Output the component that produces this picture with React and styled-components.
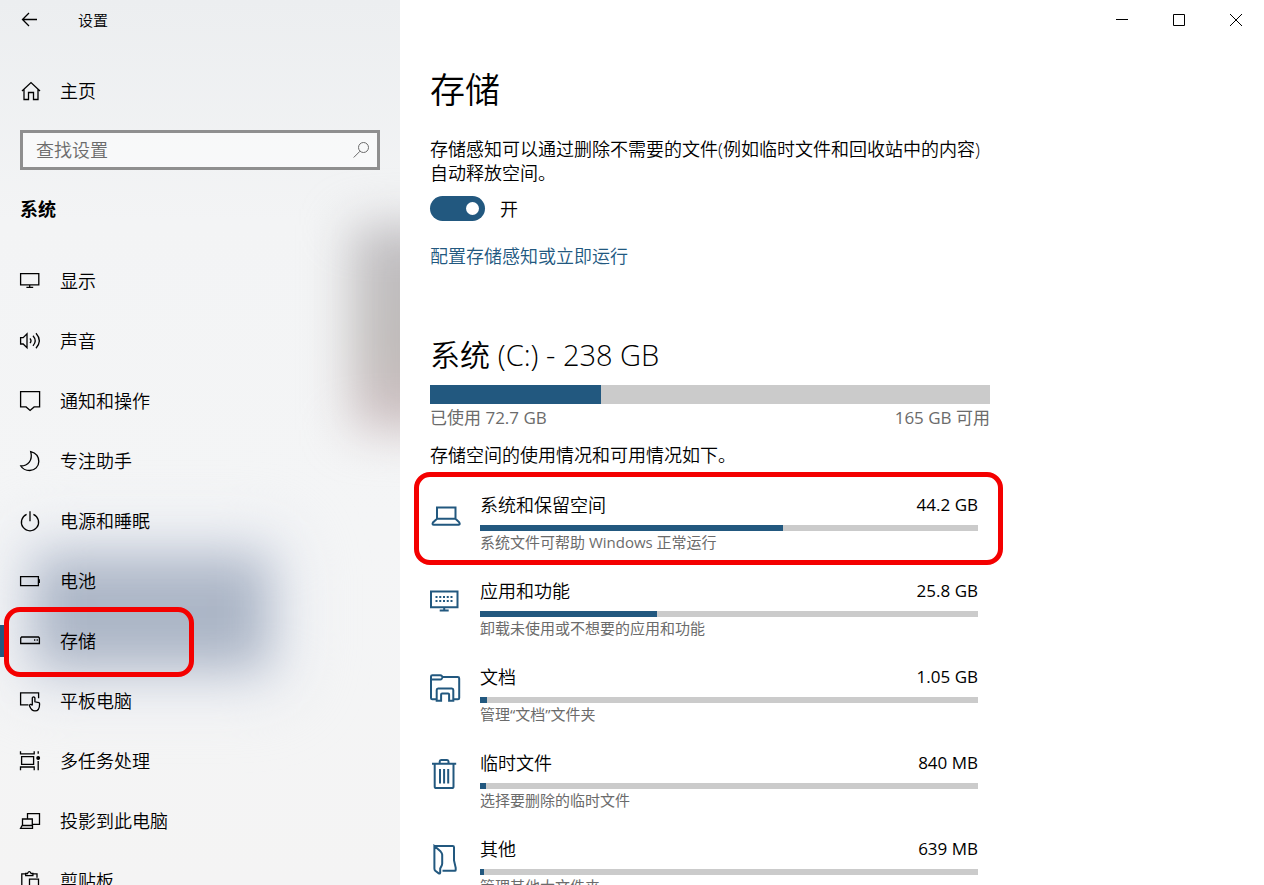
import React, { useState } from 'react'
import styled, { createGlobalStyle } from 'styled-components'

const GlobalStyle = createGlobalStyle`
:root{
    --accent: #22587f;
    --track: #cbcbcb;
    --muted: #6b6b6b;
    --mark: #f40000;
}
*{
    box-sizing: border-box;
}
body{
    margin: 0;
    background: #fff;
    color: #000;
    font-family: "Open Sans", "Noto Sans CJK SC", sans-serif;
    font-size: 18px;
    font-weight: 350;
    line-height: 24px;
    overflow: hidden;
}
button, input{
    font: inherit;
    color: inherit;
}
`

/* sidebar icons, 20 x 20 */
const menu = [
    {
        name: '显示',
        icon: <path d="M.6 2.6h18.2v11.2H.6zM9.7 13.8v2.4M6.4 16.3h6.8" />
    },
    {
        name: '声音',
        icon: <path d="M.6 6.6h2.6L7 2.9v13.8L3.2 13H.6zM10 7.3q2 2.4 0 4.9M13 4.7q4.4 5 0 10.2M16 2.3q6.6 7.4 0 15" />
    },
    {
        name: '通知和操作',
        icon: <path d="M.6.7h19v15.2h-5.5l-4 3.6-4-3.6H.6z" />
    },
    {
        name: '专注助手',
        icon: <path d="M10.7.6C16 2 18.800 6 18.800 10.500c0 5-4 9-9 9-4 0-7.300-1.600-9-4.500C8 15 13 9.500 10.700.6z" />
    },
    {
        name: '电源和睡眠',
        icon: <path d="M10 .2v10M6.600 3.300a8.600 8.600 0 1 0 6.800 0" />
    },
    {
        name: '电池',
        icon: <><path d="M.6 5.600h17.800v9H.6z" /><path d="M19.300 8.300v3.600" /></>
    },
    {
        name: '存储',
        icon: <><path d="M.7 12.500V7l.9-1h16.900l.9 1v5.500z" /><path d="M14 9h1.300M16.600 9h1.300" /></>
    },
    {
        name: '平板电脑',
        icon: <path d="M8.500 13.800H.6V1.800h18v5.500M12.300 14.500V6.800q1.300-1.800 2.600 0v4l4 .8q.8.3.7 1.300c0 4-1 7-4.600 7-3 0-4.300-1.700-5.500-5.200-.1-1.400 1.500-1.900 2.800-.5z" />
    },
    {
        name: '多任务处理',
        icon: <><path d="M1.600 5.600h12v7.800h-12zM.5.300v2.600h13.700V.3M.5 19.300V16h13.700v3.300M18.200.3v2.400M18.200 10v9.300" /><circle cx="18.200" cy="7" r="1.300" fill="currentColor" /></>
    },
    {
        name: '投影到此电脑',
        icon: <path d="M7.500 7.500V2.700h12v10.600h-7M2.500 14.500V8h9.800v6.500M2.200 14.500h10.300v2.800H.6z" />
    },
    {
        name: '剪贴板',
        icon: <path d="M6 2.800H1.800v16H8M12.600 2.800H17v4M5.700 4.600V2.500h1.800q1.800-3.600 3.600 0h1.800v2.100zM9.500 8.200h9v11.300h-9z" />
    }
]

/* storage icons, 32 x 32 */
const categories = [
    {
        name: '系统和保留空间',
        size: '44.2 GB',
        text: '系统文件可帮助 Windows 正常运行',
        used: 60.8,
        marked: true,
        icon: <path d="M7 7.500h18.500v11.300H7zM7 18.800l-4 3.600q-1.200 2.300.8 2.300h25q1.600 0 .4-2.300l-3.700-3.600" />
    },
    {
        name: '应用和功能',
        size: '25.8 GB',
        text: '卸载未使用或不想要的应用和功能',
        used: 35.5,
        icon: <><path d="M1 5.500h26.500v15.700H1zM14.200 21.200v3.500M9.700 24.500h9" /><path d="M5.500 11h17.500M5.500 15h17.500" strokeDasharray="2 1.750" /></>
    },
    {
        name: '文档',
        size: '1.05 GB',
        text: '管理“文档”文件夹',
        used: 1.4,
        icon: <path d="M6.500 27.200H2.300Q1 27.200 1 26V4.600Q1 3.200 2.400 3.200h7.800q1 0 1.800 1l.8.9h15q1.400 0 1.400 1.300V26q0 1.200-1.200 1.200h-3.700M1 7.400h9.500q1.300 0 2-2.200M6.700 28.800V18q0-1.500 1.400-1.500h13.800q1.400 0 1.400 1.500v10.800h-4.200v-6.300q0-1-1-1h-6q-1 0-1 1v6.300z" />
    },
    {
        name: '临时文件',
        size: '840 MB',
        text: '选择要删除的临时文件',
        used: 1.2,
        icon: <path d="M2 5.800h24.200M9.700 5.800V3.500q0-1.500 1.400-1.500h6q1.400 0 1.400 1.500v2.300M4.700 5.800v22.600q0 1.700 1.700 1.700h15.400q1.700 0 1.700-1.700V5.800M10 11v14.600M14.100 11v14.600M18.200 11v14.600" />
    },
    {
        name: '其他',
        size: '639 MB',
        text: '管理其他大文件夹',
        used: 0.8,
        icon: <path d="M4.400 24V2h18.300q1.300 0 1.300 1.300v13.200l1.700 7.400v2q0 .9-1 .9H12.500M4.400 2l6.300 5.600q1.300 1.300 1.500 3v9q0 1.500-1 3l-1 2v4q-.2 1.400-1.500.8l-3.400-2.600q-.9-.9-.9-2.300z" />
    }
]

function Sidebar() {
    return (
        <SideWrapper>
            <Glow $kind="blue" />
            <Glow $kind="grey" />
            <SideTitle>
                <BackButton type="button" aria-label="返回">
                    <Icon viewBox="0 0 20 20"><path d="M17 9.500H2.500M9 3L2.500 9.500 9 16" /></Icon>
                </BackButton>
                <span>设置</span>
            </SideTitle>
            <HomeLink href="#home">
                <Icon viewBox="0 0 20 20">
                    <path d="M2 10L11 1.600 20 10M4 8.500v10h4.500v-7h5v7H18v-10" />
                </Icon>
                主页
            </HomeLink>
            <SearchBox>
                <input type="text" placeholder="查找设置" aria-label="查找设置" />
                <Icon viewBox="0 0 20 20"><circle cx="12.500" cy="7.500" r="5" /><path d="M9 11.200L2.700 17.500" /></Icon>
            </SearchBox>
            <SideHeading>系统</SideHeading>
            <nav>
                {menu.map(item => (
                    <MenuItem key={item.name} href="#menu" $active={item.name === '存储'}>
                        <Icon viewBox="0 0 20 20">{item.icon}</Icon>
                        {item.name}
                        {item.name === '存储' && <MenuMark />}
                    </MenuItem>
                ))}
            </nav>
        </SideWrapper>
    )
}

function Category({ item }) {
    return (
        <CategoryRow href="#category">
            <BigIcon viewBox="0 0 32 32">{item.icon}</BigIcon>
            <div>
                <Split>
                    <span>{item.name}</span>
                    <Size>{item.size}</Size>
                </Split>
                <Bar><div style={{ width: `${item.used}%` }} /></Bar>
                <Hint>{item.text}</Hint>
            </div>
            {item.marked && <CategoryMark />}
        </CategoryRow>
    )
}

export default function App() {
    const [on, setOn] = useState(true)

    return (
        <Window>
            <GlobalStyle />
            <Sidebar />
            <Main>
                <Caption>
                    <button type="button" aria-label="最小化">
                        <svg viewBox="0 0 12 12"><path d="M0 5.500h12" /></svg>
                    </button>
                    <button type="button" aria-label="最大化">
                        <svg viewBox="0 0 12 12"><path d="M.5.500h11v11H.5z" /></svg>
                    </button>
                    <button type="button" aria-label="关闭">
                        <svg viewBox="0 0 12 12"><path d="M0 0l12 12M12 0L0 12" /></svg>
                    </button>
                </Caption>
                <Content>
                    <h1>存储</h1>
                    <Intro>存储感知可以通过删除不需要的文件(例如临时文件和回收站中的内容)自动释放空间。</Intro>
                    <Toggle>
                        <input type="checkbox" checked={on} onChange={() => setOn(!on)} />
                        {on ? '开' : '关'}
                    </Toggle>
                    <ConfigLink href="#configure">配置存储感知或立即运行</ConfigLink>
                    <h2>系统 <span>(C:) - 238 GB</span></h2>
                    <Bar $big><div style={{ width: '30.5%' }} /></Bar>
                    <Split $muted>
                        <span>已使用 72.7 GB</span>
                        <span>165 GB 可用</span>
                    </Split>
                    <Summary>存储空间的使用情况和可用情况如下。</Summary>
                    <CategoryList>
                        {categories.map(item => <Category key={item.name} item={item} />)}
                    </CategoryList>
                </Content>
            </Main>
        </Window>
    )
}

const Window = styled.div`
display: flex;
height: 100vh;
overflow: hidden;
`

const SideWrapper = styled.aside`
position: relative;
z-index: 0;
flex: 0 0 400px;
overflow: hidden;
background: linear-gradient(#eceef0, #f3f4f5 25%, #f4f5f6 60%, #f4f4f4);
`

/* soft shapes of the desktop behind the acrylic pane */
const Glow = styled.div`
position: absolute;
z-index: -1;
filter: blur(24px);
${props => props.$kind === 'blue' ? `
    left: 36px;
    top: 555px;
    width: 232px;
    height: 114px;
    background: linear-gradient(#b4bccb, #a9b4c5 50%, #b2bac9);
    box-shadow: 0 0 40px 20px #e2e6ef;
` : `
    left: 352px;
    top: 225px;
    width: 130px;
    height: 205px;
    background: linear-gradient(#c0bec2, #bfbbb9 60%, #d0c0c3);
`}
`

const Icon = styled.svg`
flex: none;
width: 20px;
height: 20px;
fill: none;
stroke: currentColor;
stroke-width: 1.3;
overflow: visible;
`

const SideTitle = styled.div`
display: flex;
align-items: center;
height: 40px;
padding-left: 20px;
font-size: 15px;
`

const BackButton = styled.button`
display: flex;
width: 58px;
padding: 0;
border: 0;
background: none;
`

const HomeLink = styled.a`
display: flex;
align-items: center;
gap: 20px;
height: 50px;
margin-top: 26px;
padding-left: 20px;
color: inherit;
text-decoration: none;
`

const SearchBox = styled.label`
display: flex;
align-items: center;
height: 40px;
margin: 14px 20px 0;
padding: 0 6px 0 13px;
border: 3px solid #8f8f8f;
background: rgba(255, 255, 255, 0.5);
color: var(--muted);
input{
    flex: 1;
    min-width: 0;
    padding: 0;
    border: 0;
    outline: 0;
    background: none;
}
input::placeholder{
    color: var(--muted);
    opacity: 1;
}
${Icon}{
    stroke-width: 1;
}
`

const SideHeading = styled.h3`
margin: 27px 20px 30px;
font-size: 18px;
font-weight: 700;
`

const MenuItem = styled.a`
position: relative;
display: flex;
align-items: center;
gap: 20px;
height: 60px;
padding-left: 16px;
border-left: 4px solid transparent;
border-image: ${props => props.$active ? 'linear-gradient(transparent 25%, var(--accent) 25% 75%, transparent 75%) 1' : 'none'};
color: inherit;
text-decoration: none;
`

const Mark = styled.span`
position: absolute;
border: 5px solid var(--mark);
border-radius: 16px;
pointer-events: none;
`

const MenuMark = styled(Mark)`
left: 0;
top: -4px;
width: 190px;
height: 70px;
`

const CategoryMark = styled(Mark)`
inset: -21px -25px -13px -16px;
`

const Main = styled.main`
flex: 1;
min-width: 0;
`

const Caption = styled.div`
display: flex;
justify-content: flex-end;
height: 40px;
button{
    display: flex;
    align-items: center;
    justify-content: center;
    width: 57px;
    padding: 0;
    border: 0;
    background: none;
}
svg{
    width: 12px;
    height: 12px;
    fill: none;
    stroke: #000;
}
`

const Content = styled.div`
max-width: 620px;
padding: 26px 30px 0;
h1{
    margin: 0;
    font-size: 35px;
    font-weight: 350;
    line-height: 48px;
}
h2{
    margin: 67px 0 10px;
    font-size: 30px;
    font-weight: 350;
    line-height: 40px;
}
h2 span{
    font-size: 29px;
    font-weight: 300;
}
`

const Intro = styled.p`
margin: 23px 0 11px;
`

const Toggle = styled.label`
display: flex;
align-items: center;
gap: 15px;
width: fit-content;
input{
    appearance: none;
    display: flex;
    align-items: center;
    justify-content: flex-end;
    width: 55px;
    height: 25px;
    margin: 0;
    padding: 0 6px;
    border-radius: 13px;
    background: var(--accent);
}
input:not(:checked){
    justify-content: flex-start;
    background: #888;
}
input::before{
    content: "";
    width: 13px;
    height: 13px;
    border-radius: 50%;
    background: #fff;
}
`

const ConfigLink = styled.a`
display: block;
width: fit-content;
margin-top: 23px;
color: var(--accent);
text-decoration: none;
`

const Bar = styled.div`
height: ${props => props.$big ? '19px' : '6px'};
margin: ${props => props.$big ? '0 0 2px' : '8px 0 1px'};
background: var(--track);
div{
    height: 100%;
    background: var(--accent);
}
`

const Split = styled.div`
display: flex;
justify-content: space-between;
${props => props.$muted && `
    color: var(--muted);
    font-size: 17px;
    font-weight: 400;
`}
`

const Size = styled.span`
font-size: 17px;
font-weight: 400;
`

const Summary = styled.p`
margin: 13px 0 26px;
`

const CategoryList = styled.div`
display: grid;
gap: 27px;
padding-right: 12px;
`

const CategoryRow = styled.a`
position: relative;
display: grid;
grid-template-columns: 50px 1fr;
color: inherit;
text-decoration: none;
`

const BigIcon = styled.svg`
width: 32px;
height: 32px;
margin-top: 7px;
fill: none;
stroke: var(--accent);
stroke-width: 2;
`

const Hint = styled.div`
color: var(--muted);
font-size: 15px;
font-weight: 400;
line-height: 20px;
`
